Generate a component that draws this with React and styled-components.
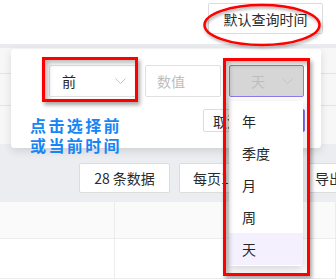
import React from 'react'
import styled, { createGlobalStyle } from 'styled-components'

const GlobalStyle = createGlobalStyle`
  html, body { margin: 0; padding: 0; background: #fff; }
  body { font-family: "Noto Sans CJK SC", "Noto Sans", sans-serif; color: #262626; }
`

const Page = styled.div`
  position: relative;
  width: 336px;
  height: 279px;
  overflow: hidden;
  display: flex;
  flex-direction: column;
  background: #fff;
`

const TopBar = styled.div`
  height: 45px;
  display: flex;
  justify-content: flex-end;
  align-items: flex-start;
  gap: 13px;
  padding-top: 3px;
  box-sizing: border-box;
  margin-right: -120px;
  background: #fff;
`

const Btn = styled.button`
  height: ${p => p.h || 30}px;
  width: ${p => p.w}px;
  padding: 0 0 0 ${p => p.pl || 0}px;
  text-align: ${p => (p.pl ? 'left' : 'center')};
  border: 1px solid ${p => (p.primary ? '#8e74f2' : '#dcdcdc')};
  border-radius: 2px;
  background: ${p => (p.primary ? '#7b5cf0' : '#fff')};
  color: ${p => (p.primary ? '#fff' : '#2b2b2b')};
  font-family: "Noto Sans CJK SC", sans-serif;
  font-size: 14px;
  line-height: 1;
  flex-shrink: 0;
  box-sizing: border-box;
`

const FilterZone = styled.div`
  height: 103px;
  border-top: 4px solid #e9ebee;
  box-sizing: border-box;
  background: #f7f7f8;
  display: flex;
  flex-direction: column;
`

const FormLine = styled.div`
  height: ${p => p.h}px;
  border-bottom: 1px solid #e4e4e4;
  box-sizing: border-box;
`

const Toolbar = styled.div`
  height: 59px;
  background: #ebedf0;
  display: flex;
  align-items: flex-start;
  gap: 9px;
  padding: 19px 0 0 79px;
  box-sizing: border-box;
`

const Table = styled.div`
  flex: 1;
  display: flex;
  flex-direction: column;
`

const Row = styled.div`
  display: flex;
  height: ${p => p.h}px;
  background: ${p => p.bg || '#fff'};
  border-bottom: 1px solid #ececec;
  box-sizing: border-box;
`

const Cell = styled.div`
  width: ${p => (p.w ? `${p.w}px` : 'auto')};
  flex: ${p => (p.w ? 'none' : 1)};
  border-right: 1px solid #ececec;
  box-sizing: border-box;
`

const Popover = styled.div`
  position: absolute;
  left: 11px;
  top: 49px;
  width: 310px;
  height: 99px;
  background: #fff;
  border-radius: 3px;
  box-shadow: 0 3px 8px rgba(0, 0, 0, 0.12);
  padding: 16px 16px 0 38px;
  box-sizing: border-box;
  display: flex;
  flex-direction: column;
`

const Fields = styled.div`
  display: flex;
  gap: 8px;
`

const Field = styled.div`
  width: ${p => p.w}px;
  height: 32px;
  box-sizing: border-box;
  border: 1px solid ${p => (p.active ? '#8f78ee' : '#e0e0e0')};
  border-radius: 2px;
  background: ${p => (p.active ? '#d6d6d6' : '#fff')};
  display: flex;
  align-items: center;
  justify-content: space-between;
  padding: 0 10px 0 ${p => p.pl}px;
  font-size: 14px;
  color: ${p => (p.muted ? '#bdbdbd' : '#262626')};
`

const Actions = styled.div`
  display: flex;
  justify-content: flex-end;
  gap: 8px;
  margin-top: 12px;
`

const Chevron = () => (
  <svg width="11" height="6" viewBox="0 0 11 6">
    <polyline points="0.5,0.5 5.5,5.5 10.5,0.5" fill="none" stroke="#c4c4c4" strokeWidth="1" />
  </svg>
)

const Dropdown = styled.ul`
  position: absolute;
  left: 229px;
  top: 101px;
  width: 74px;
  margin: 0;
  padding: 4px 0 1px;
  list-style: none;
  background: #fff;
  border-radius: 2px;
  box-shadow: 0 3px 10px rgba(0, 0, 0, 0.18);
`

const Option = styled.li`
  height: 32px;
  display: flex;
  align-items: center;
  padding-left: 13px;
  font-size: 14px;
  color: #262626;
  background: ${p => (p.selected ? '#f4f0fd' : 'transparent')};
`

const Note = styled.div`
  position: absolute;
  left: 30px;
  top: 115px;
  font-size: 16px;
  font-weight: 700;
  line-height: 20px;
  letter-spacing: 2.4px;
  color: #1685f5;
`

const Mark = styled.div`
  position: absolute;
  left: ${p => p.x}px;
  top: ${p => p.y}px;
  width: ${p => p.w}px;
  height: ${p => p.h}px;
  border: 3px solid #f00;
  box-sizing: border-box;
  box-shadow: 2px 3px 4px rgba(0, 0, 0, 0.35), inset 3px 3px 5px rgba(0, 0, 0, 0.28);
  pointer-events: none;
`

const Ring = styled.svg`
  position: absolute;
  left: 200px;
  top: 2px;
  overflow: visible;
`

const options = ['年', '季度', '月', '周', '天']

export default function App() {
  return (
    <Page>
      <GlobalStyle />
      <TopBar>
        <Btn h={31} w={115}>默认查询时间</Btn>
        <Btn h={31} w={120}>查询</Btn>
      </TopBar>
      <FilterZone>
        <FormLine h={26} />
        <FormLine h={32} />
      </FilterZone>
      <Toolbar>
        <Btn w={91}>28 条数据</Btn>
        <Btn w={120} pl={13}>每页10条</Btn>
        <Btn w={60} pl={6}>导出</Btn>
      </Toolbar>
      <Table>
        <Row h={37} bg="#fafafa">
          <Cell w={115} />
          <Cell />
        </Row>
        <Row h={40}>
          <Cell w={115} />
          <Cell />
        </Row>
      </Table>

      <Popover>
        <Fields>
          <Field w={88} pl={12}>
            前
            <Chevron />
          </Field>
          <Field w={76} pl={11} muted>数值</Field>
          <Field w={75} pl={21} muted active>
            天
            <Chevron />
          </Field>
        </Fields>
        <Actions>
          <Btn h={23} w={48}>取消</Btn>
          <Btn h={23} w={46} primary>确定</Btn>
        </Actions>
      </Popover>

      <Dropdown>
        {options.map(o => (
          <Option key={o} selected={o === '天'}>{o}</Option>
        ))}
      </Dropdown>

      <Note>
        点击选择前
        <br />
        或当前时间
      </Note>

      <Mark x={42} y={57} w={96} h={45} />
      <Mark x={223} y={58} w={87} h={218} />
      <Ring width="124" height="46" viewBox="0 0 124 46">
        <defs>
          <filter id="sh" x="-10%" y="-20%" width="120%" height="150%">
            <feDropShadow dx="1" dy="2" stdDeviation="1.5" floodColor="#000" floodOpacity="0.35" />
          </filter>
        </defs>
        <ellipse cx="62" cy="23" rx="57.5" ry="20" fill="none" stroke="#f00" strokeWidth="2.5" filter="url(#sh)" />
      </Ring>
    </Page>
  )
}
